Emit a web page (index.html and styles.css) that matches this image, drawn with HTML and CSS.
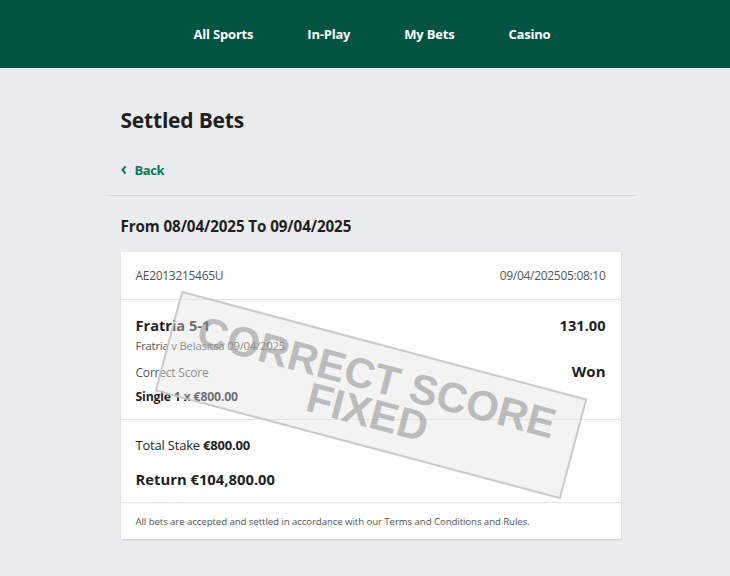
FILE: index.html
```html
<!DOCTYPE html>
<html>
<head>
<meta charset="utf-8">
<link rel="stylesheet" href="styles.css">
</head>
<body>
<header class="topbar">
  <nav class="nav">
    <a class="nav-item">All Sports</a>
    <a class="nav-item">In-Play</a>
    <a class="nav-item">My Bets</a>
    <a class="nav-item">Casino</a>
  </nav>
</header>
<main class="main">
  <h1 class="title">Settled Bets</h1>
  <div class="back-row">
    <a class="back"><svg class="chev" viewBox="0 0 6 10" width="6" height="10"><path d="M4.5 1.5 L1.5 5 L4.5 8.5" fill="none" stroke="currentColor" stroke-width="2"/></svg>Back</a>
  </div>
  <div class="content">
    <h2 class="range">From 08/04/2025 To 09/04/2025</h2>
    <section class="card">
      <div class="card-head">
        <span>AE2013215465U</span>
        <span>09/04/2025<span class="time">05:08:10</span></span>
      </div>
      <div class="card-body">
        <div class="row">
          <div class="sel">Fratria 5-1</div>
          <div class="odds">131.00</div>
        </div>
        <div class="event">Fratria v Belasitsa 09/04/2025</div>
        <div class="row market-row">
          <div class="market">Correct Score</div>
          <div class="result">Won</div>
        </div>
        <div class="single">Single 1 x €800.00</div>
      </div>
      <div class="card-totals">
        <div class="stake">Total Stake <b>€800.00</b></div>
        <div class="return">Return €104,800.00</div>
      </div>
      <div class="card-foot">All bets are accepted and settled in accordance with our Terms and Conditions and Rules.</div>
      <div class="stamp">
        <span>CORRECT SCORE</span>
        <span>FIXED</span>
      </div>
    </section>
  </div>
</main>
</body>
</html>
```
FILE: styles.css
```css
* { box-sizing: border-box; }
html, body { margin: 0; padding: 0; }
body {
  background: #ebecee;
  font-family: "Open Sans", "Noto Sans", sans-serif;
  color: #1f1f1f;
  height: 576px;
  overflow: hidden;
}
.topbar {
  background: #005441;
  height: 68px;
  display: flex;
  align-items: center;
  justify-content: center;
  padding-left: 14px;
}
.nav { display: flex; gap: 54px; }
.nav-item {
  color: #fff;
  font-weight: 700;
  font-size: 13px;
  letter-spacing: -0.2px;
  line-height: 18px;
}
.main {
  width: 541px;
  margin: 0 auto;
  padding-left: 10px;
}
.title {
  margin: 0;
  padding: 0 16px;
  font-size: 21px;
  font-weight: 700;
  line-height: 30px;
  margin-top: 37px;
  letter-spacing: -0.2px;
}
.back-row {
  padding: 0 16px;
  height: 61px;
  border-bottom: 1px solid #d7d8da;
  padding-top: 23px;
}
.back {
  color: #0b7a57;
  font-weight: 700;
  font-size: 13px;
  letter-spacing: -0.4px;
  line-height: 18px;
  display: inline-flex;
  align-items: center;
}
.chev { margin-right: 8px; }
.content { padding: 0 15px 0 16px; }
.range {
  margin: 0;
  font-size: 15.2px;
  font-weight: 700;
  line-height: 20px;
  margin-top: 20px;
  margin-bottom: 16px;
  letter-spacing: -0.1px;
}
.card {
  background: #fff;
  position: relative;
  overflow: hidden;
  box-shadow: 0 1px 2px rgba(0,0,0,0.12);
}
.card-head {
  height: 48px;
  padding: 0 15px;
  display: flex;
  justify-content: space-between;
  align-items: center;
  font-size: 12px;
  color: #555;
  border-bottom: 1px solid #e3e3e3;
  letter-spacing: -0.3px;
}
.card-body {
  padding: 15px 15px 10px;
  border-bottom: 1px solid #e3e3e3;
  height: 120px;
}
.row { display: flex; justify-content: space-between; align-items: baseline; }
.sel, .odds {
  font-size: 14.6px;
  font-weight: 700;
  line-height: 20px;
}
.event {
  font-size: 11.3px;
  color: #555;
  line-height: 16px;
  margin-top: 3px;
  letter-spacing: -0.2px;
}
.market-row { margin-top: 7px; }
.market { font-size: 12px; color: #555; letter-spacing: -0.2px; }
.result { font-size: 15px; font-weight: 700; }
.single {
  font-size: 12.3px;
  font-weight: 700;
  margin-top: 7px;
  letter-spacing: -0.2px;
}
.card-totals {
  padding: 15px 15px 0;
  height: 83px;
  border-bottom: 1px solid #e3e3e3;
}
.stake { font-size: 13px; line-height: 20px; letter-spacing: -0.2px; }
.return {
  font-size: 14.8px;
  font-weight: 700;
  margin-top: 13px;
  line-height: 22px;
}
.card-foot {
  height: 36px;
  padding: 0 15px;
  font-size: 9.7px;
  color: #555;
  display: flex;
  align-items: center;
  letter-spacing: -0.1px;
}
.stamp {
  position: absolute;
  left: 40px;
  top: 91px;
  width: 420px;
  height: 104px;
  transform: rotate(14.9deg);
  background: rgba(225,225,225,0.4);
  border: 2px solid rgba(195,195,195,0.85);
  display: flex;
  flex-direction: column;
  align-items: center;
  justify-content: center;
  color: rgba(140,140,140,0.55);
  font-family: "Liberation Sans", Arial, sans-serif;
  font-weight: 700;
  font-size: 42px;
  line-height: 36px;
  padding-left: 2px;
}
```
